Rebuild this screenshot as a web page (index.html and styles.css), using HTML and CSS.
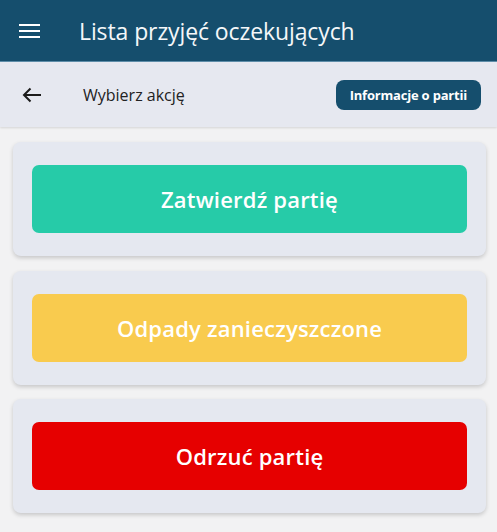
FILE: index.html
```html
<!DOCTYPE html>
<html lang="pl">
<head>
<meta charset="utf-8">
<title>Lista przyjęć oczekujących</title>
<link rel="stylesheet" href="styles.css">
</head>
<body>
<header class="appbar">
  <button class="menu-btn" aria-label="Menu">
    <svg width="22" height="16" viewBox="0 0 22 16"><rect x="0" y="1" width="21" height="2" fill="#fff"/><rect x="0" y="7" width="21" height="2" fill="#fff"/><rect x="0" y="13" width="21" height="2" fill="#fff"/></svg>
  </button>
  <h1 class="title">Lista przyjęć oczekujących</h1>
</header>
<div class="subbar">
  <button class="back-btn" aria-label="Wstecz">
    <svg width="20" height="16" viewBox="0 0 20 16"><path d="M19 8H2M8.5 1.5L2 8l6.5 6.5" fill="none" stroke="#1c1c1c" stroke-width="2"/></svg>
  </button>
  <span class="subtitle">Wybierz akcję</span>
  <button class="info-btn">Informacje o partii</button>
</div>
<main class="actions">
  <section class="card"><button class="action green">Zatwierdź partię</button></section>
  <section class="card"><button class="action yellow">Odpady zanieczyszczone</button></section>
  <section class="card"><button class="action red">Odrzuć partię</button></section>
</main>
</body>
</html>
```
FILE: styles.css
```css
* { box-sizing: border-box; }
html, body { margin: 0; padding: 0; }
body {
  background: #f2f2f3;
  font-family: "Open Sans", "Noto Sans", sans-serif;
  width: 497px;
  height: 532px;
  overflow: hidden;
}
button { font-family: inherit; border: 0; cursor: pointer; }
.appbar {
  height: 62px;
  background: #154e6d;
  display: flex;
  align-items: center;
  border-bottom: 1px solid #5f8fab;
}
.menu-btn {
  background: none;
  padding: 0;
  margin-left: 19px;
  width: 22px;
  height: 16px;
  display: flex;
}
.title {
  margin: 0 0 0 38px;
  color: #f4f7f9;
  font-size: 23px;
  font-weight: 400;
  letter-spacing: -0.1px;
}
.subbar {
  height: 65px;
  background: #e6e8f0;
  display: flex;
  align-items: center;
  box-shadow: 0 1px 2px rgba(0,0,0,0.12);
}
.back-btn {
  background: none;
  padding: 0;
  margin-left: 22px;
  width: 20px;
  height: 16px;
  display: flex;
}
.subtitle {
  margin-left: 41px;
  font-size: 16px;
  color: #222;
  flex: 1;
}
.info-btn {
  margin-right: 16px;
  background: #154e6d;
  color: #fff;
  font-size: 13px;
  font-weight: 700;
  height: 30px;
  padding: 0 14px;
  border-radius: 8px;
  letter-spacing: -0.2px;
}
.actions {
  padding: 15px 11px 0 13px;
  display: flex;
  flex-direction: column;
  gap: 14.5px;
}
.card {
  background: #e5e8f0;
  border-radius: 8px;
  height: 114px;
  padding: 23px 19px;
  box-shadow: 0 2px 4px rgba(0,0,0,0.18);
}
.action {
  width: 100%;
  height: 68px;
  border-radius: 7px;
  color: #fff;
  font-size: 22px;
  font-weight: 600;
  letter-spacing: 0.2px;
}
.green { background: #26cba8; }
.yellow { background: #f9cb4e; }
.red { background: #e60000; }
```
